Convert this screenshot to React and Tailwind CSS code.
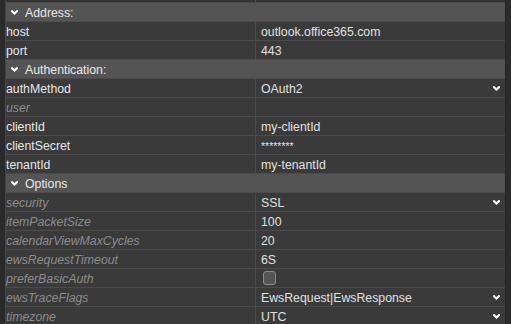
import { useState } from "react";

const sections = [
    {
        title: "Address:",
        rows: [
            { name: "host", value: "outlook.office365.com" },
            { name: "port", value: "443" },
        ],
    },
    {
        title: "Authentication:",
        rows: [
            { name: "authMethod", value: "OAuth2", select: true },
            { name: "user", value: "", dim: true },
            { name: "clientId", value: "my-clientId" },
            { name: "clientSecret", value: "********", secret: true },
            { name: "tenantId", value: "my-tenantId" },
        ],
    },
    {
        title: "Options",
        rows: [
            { name: "security", value: "SSL", select: true, dim: true },
            { name: "itemPacketSize", value: "100", dim: true },
            { name: "calendarViewMaxCycles", value: "20", dim: true },
            { name: "ewsRequestTimeout", value: "6S", dim: true },
            { name: "preferBasicAuth", check: true, dim: true },
            { name: "ewsTraceFlags", value: "EwsRequest|EwsResponse", select: true, dim: true },
            { name: "timezone", value: "UTC", select: true, dim: true },
        ],
    },
];

function Chevron({ className }) {
    return (
        <svg viewBox="0 0 7 5" className={className} fill="none" stroke="currentColor" strokeWidth="2.2" strokeLinecap="square">
            <path d="M1.1 1.2 L3.5 3.5 L5.9 1.2" />
        </svg>
    );
}

function Row({ row }) {
    const [checked, setChecked] = useState(false);
    return (
        <div className="flex h-[19px] border-b border-[#4b4b4b] bg-[#3a3a3a]">
            <div className={`w-[250px] shrink-0 pt-[2px] leading-[16px] border-r border-[#4b4b4b] ${row.dim ? "italic text-[#8c8c8c]" : "text-[#e6e6e6]"}`}>
                {row.name}
            </div>
            <div className="flex-1 flex items-center pl-[5px] pr-[5px] text-[#e0e0e0]">
                {row.check ? (
                    <button
                        onClick={() => setChecked(!checked)}
                        className="ml-[2px] w-[13px] h-[14px] rounded-[3px] border border-[#8a8a8a] bg-[#555555]"
                    />
                ) : (
                    <span className={`flex-1 pt-[2px] leading-[16px] ${row.secret ? "text-[10.5px]" : ""}`}>{row.value}</span>
                )}
                {row.select && <Chevron className="w-[7px] h-[5px] text-white" />}
            </div>
        </div>
    );
}

export default function App() {
    return (
        <div className="w-[511px] h-[324px] overflow-hidden flex bg-[#2b2b2b] text-[12.3px]" style={{ fontFamily: "'Liberation Sans', Arial, sans-serif" }}>
            <div className="w-[6px] shrink-0 bg-[#2a2a2a] border-r border-[#454545]" />
            <div className="w-[499px] shrink-0 flex flex-col">
                <div className="flex h-[3px] shrink-0 border-b border-[#4b4b4b] bg-[#333333]">
                    <div className="w-[250px] border-r border-[#4b4b4b]" />
                </div>
                {sections.map((s) => (
                    <div key={s.title}>
                        <div className="flex items-center h-[19px] border-b border-[#4b4b4b] bg-[#545454] text-[#e8e8e8]">
                            <Chevron className="ml-[5px] mr-[7px] w-[7px] h-[5px] text-white" />
                            <span className="pt-[2px] leading-[16px]">{s.title}</span>
                        </div>
                        {s.rows.map((r) => (
                            <Row key={r.name} row={r} />
                        ))}
                    </div>
                ))}
            </div>
            <div className="flex-1 bg-[#2b2b2b] border-l border-[#252525]" />
        </div>
    );
}
